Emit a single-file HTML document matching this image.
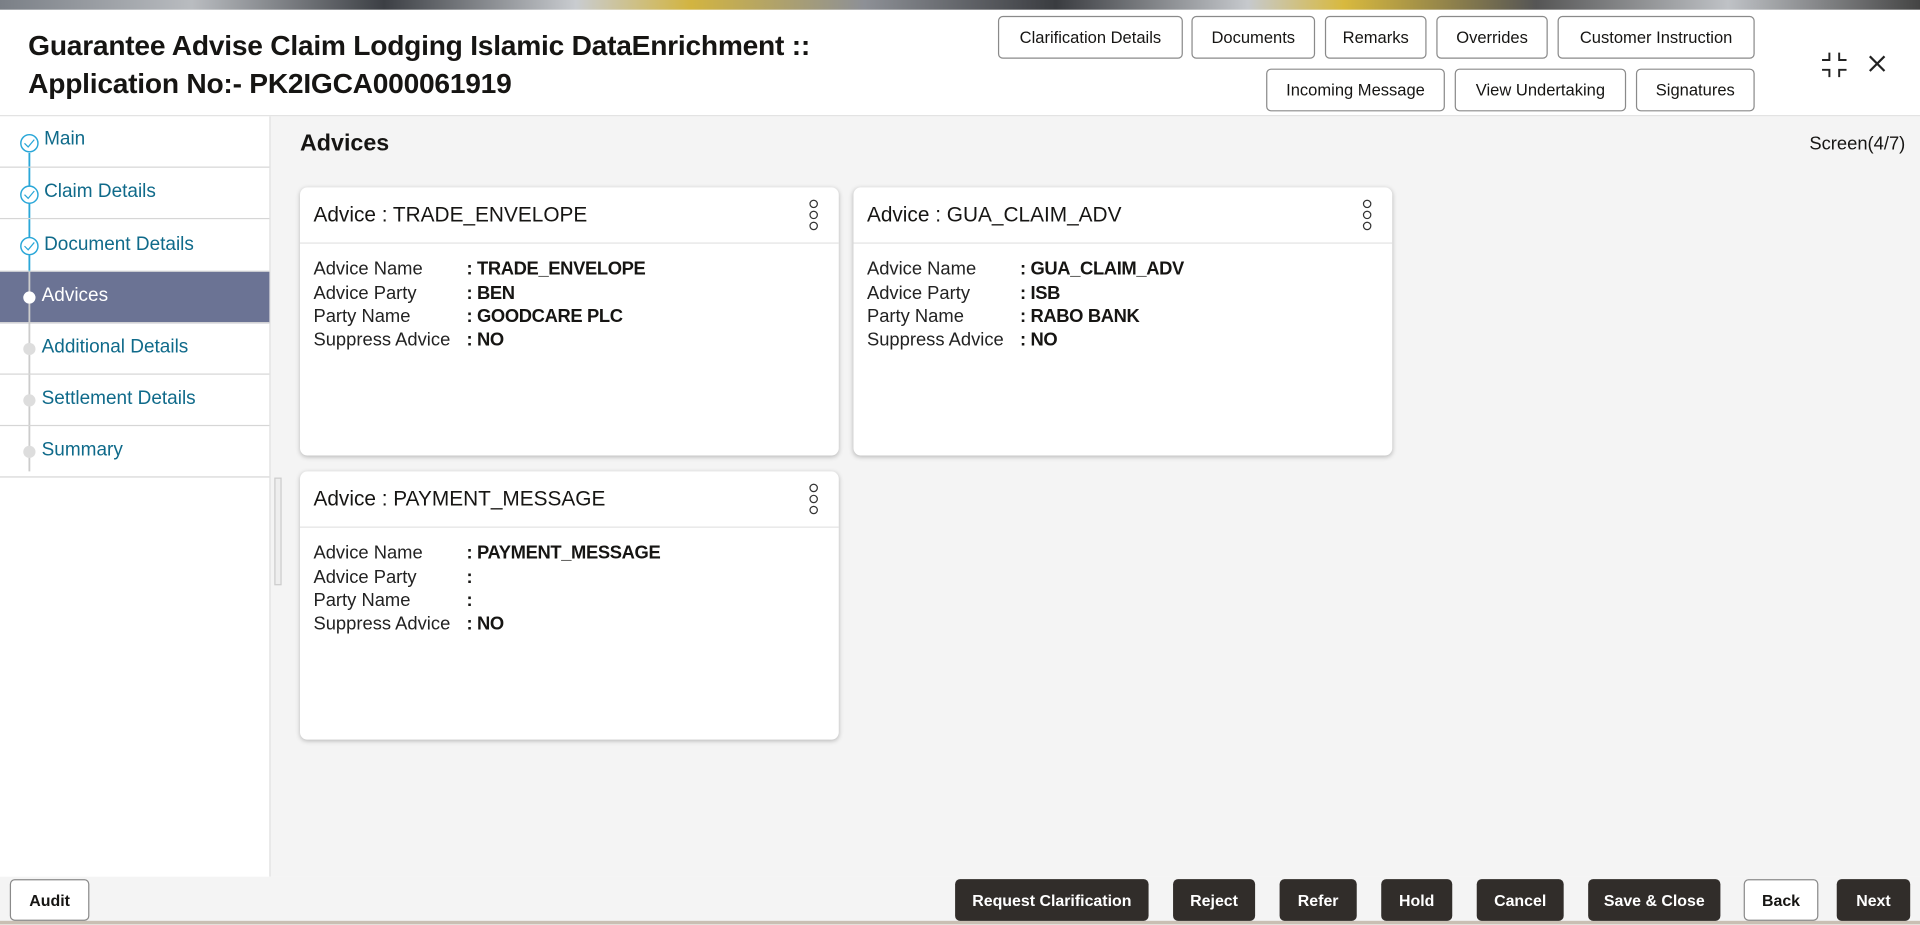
<!DOCTYPE html>
<html><head><meta charset="utf-8"><style>
*{box-sizing:border-box;margin:0;padding:0}
html,body{width:1920px;height:925px;overflow:hidden;background:#fff;font-family:"Liberation Sans",sans-serif;color:#161513}
#w{position:absolute;left:0;top:0;width:1568px;height:755px;transform:scale(1.22449);transform-origin:0 0}
.ab{position:absolute}
.top{left:0;top:0;width:1568px;height:8px;background:linear-gradient(90deg,#7a7f86,#b9bcc0 10%,#3c3f44 20%,#c9ccd0 30%,#d2b440 36%,#8d9096 45%,#3a3c40 55%,#c6c9cd 65%,#d8b93e 70%,#555 80%,#bfc2c6 90%,#444)}
.hdr{left:0;top:8px;width:1568px;height:87px;background:#fff;border-bottom:1px solid #e0e0e0}
.t{left:23px;font-size:23px;font-weight:bold;letter-spacing:-0.2px}
.b{position:absolute;height:35px;border:1px solid #8a8a8a;border-radius:4px;background:#fff;font-size:13.5px;display:flex;align-items:center;justify-content:center;color:#161513}
.side{left:0;top:95px;width:221px;height:621px;background:#fff;border-right:1px solid #ddd}
.it{position:absolute;left:0;width:220px;height:42px;border-bottom:1px solid #d6d6d6;font-size:15.5px;color:#0f6a8a}
.it span{position:absolute;left:34px;top:11px}
.main{left:221px;top:95px;width:1347px;height:621px;background:#f4f4f4}
.card{position:absolute;width:440px;height:219px;background:#fff;border-radius:6px;box-shadow:0 1px 4px rgba(0,0,0,.25)}
.ch{height:46px;border-bottom:1px solid #e3e3e3;font-size:17px;padding:13px 0 0 11px}
.row{position:absolute;left:11px;font-size:15px;color:#222}
.row b{position:absolute;left:125px;white-space:nowrap;color:#161513;letter-spacing:-0.3px}
.keb{position:absolute;right:17px;top:10px;width:7px}
.keb i{display:block;width:7px;height:7px;border:1.3px solid #333;border-radius:50%;margin-bottom:2px}
.f{position:absolute;top:718px;height:34px;border-radius:4px;background:#312d2a;color:#fff;font-size:13px;font-weight:bold;display:flex;align-items:center;justify-content:center}
</style></head><body><div id="w">
<div class="ab top"></div>
<div class="ab hdr"></div>
<div class="ab t" style="top:24px">Guarantee Advise Claim Lodging Islamic DataEnrichment ::</div>
<div class="ab t" style="top:55px">Application No:- PK2IGCA000061919</div>
<div class="b" style="left:815px;top:13px;width:151px">Clarification Details</div>
<div class="b" style="left:973px;top:13px;width:101px">Documents</div>
<div class="b" style="left:1082px;top:13px;width:83px">Remarks</div>
<div class="b" style="left:1173px;top:13px;width:91px">Overrides</div>
<div class="b" style="left:1272px;top:13px;width:161px">Customer Instruction</div>
<div class="b" style="left:1034px;top:56px;width:146px">Incoming Message</div>
<div class="b" style="left:1188px;top:56px;width:140px">View Undertaking</div>
<div class="b" style="left:1336px;top:56px;width:97px">Signatures</div>
<svg class="ab" style="left:1486px;top:41px" width="24" height="24" viewBox="0 0 24 24" fill="none" stroke="#222" stroke-width="1.6"><path d="M8 2v6H2M16 2v6h6M8 22v-6H2M16 22v-6h6"/></svg>
<svg class="ab" style="left:1525px;top:44px" width="16" height="16" viewBox="0 0 16 16" stroke="#222" stroke-width="1.8"><path d="M2 2l12 12M14 2L2 14"/></svg>

<div class="ab side">
<svg class="ab" style="left:16px;top:0" width="16" height="300"><line x1="8" y1="30" x2="8" y2="130" stroke="#2aa7d8" stroke-width="1.5"/><line x1="8" y1="130" x2="8" y2="290" stroke="#ccc" stroke-width="1.5"/>
<g fill="#fff" stroke="#2aa7d8" stroke-width="1.2"><circle cx="8" cy="22" r="7"/><circle cx="8" cy="64" r="7"/><circle cx="8" cy="106" r="7"/></g>
<g fill="none" stroke="#2aa7d8" stroke-width="1"><path d="M4 22l3 3 5-6M4 64l3 3 5-6M4 106l3 3 5-6"/></g>
<circle cx="8" cy="190" r="5" fill="#ddd"/><circle cx="8" cy="232" r="5" fill="#ddd"/><circle cx="8" cy="274" r="5" fill="#ddd"/></svg>
<div class="it" style="top:0"><span style="top:10px;left:36px">Main</span></div>
<div class="it" style="top:42px"><span style="left:36px">Claim Details</span></div>
<div class="it" style="top:85px"><span style="left:36px">Document Details</span></div>
<div class="it" style="top:127px;background:#6b7394;color:#fff"><span>Advices</span></div>
<div class="it" style="top:169px"><span>Additional Details</span></div>
<div class="it" style="top:211px"><span>Settlement Details</span></div>
<div class="it" style="top:253px"><span>Summary</span></div>
<svg class="ab" style="left:16px;top:127px" width="16" height="42"><line x1="8" y1="0" x2="8" y2="42" stroke="#ccc" stroke-width="1.5"/><circle cx="8" cy="21" r="5" fill="#fff"/></svg>
</div>

<div class="ab main">
<div class="ab" style="left:24px;top:12px;font-size:19px;font-weight:bold">Advices</div>
<div class="ab" style="right:12px;top:14px;font-size:15px">Screen(4/7)</div>
<div class="ab" style="left:3px;top:295px;width:6px;height:88px;border:1px solid #ccc;background:#eee"></div>

<div class="card" style="left:24px;top:58px"><div class="ch">Advice : TRADE_ENVELOPE</div><div class="keb"><i></i><i></i><i></i></div>
<div class="row" style="top:58px">Advice Name<b>: TRADE_ENVELOPE</b></div>
<div class="row" style="top:78px">Advice Party<b>: BEN</b></div>
<div class="row" style="top:97px">Party Name<b>: GOODCARE PLC</b></div>
<div class="row" style="top:116px">Suppress Advice<b>: NO</b></div></div>

<div class="card" style="left:476px;top:58px"><div class="ch">Advice : GUA_CLAIM_ADV</div><div class="keb"><i></i><i></i><i></i></div>
<div class="row" style="top:58px">Advice Name<b>: GUA_CLAIM_ADV</b></div>
<div class="row" style="top:78px">Advice Party<b>: ISB</b></div>
<div class="row" style="top:97px">Party Name<b>: RABO BANK</b></div>
<div class="row" style="top:116px">Suppress Advice<b>: NO</b></div></div>

<div class="card" style="left:24px;top:290px"><div class="ch">Advice : PAYMENT_MESSAGE</div><div class="keb"><i></i><i></i><i></i></div>
<div class="row" style="top:58px">Advice Name<b>: PAYMENT_MESSAGE</b></div>
<div class="row" style="top:78px">Advice Party<b>:</b></div>
<div class="row" style="top:97px">Party Name<b>:</b></div>
<div class="row" style="top:116px">Suppress Advice<b>: NO</b></div></div>
</div>

<div class="ab" style="left:0;top:716px;width:1568px;height:39px;background:#f4f4f4"></div>
<div class="ab" style="left:0;top:752px;width:1568px;height:3px;background:#c9bfb3"></div>
<div class="b" style="left:8px;top:718px;width:65px;height:34px;font-weight:bold;font-size:13px">Audit</div>
<div class="f" style="left:780px;width:158px">Request Clarification</div>
<div class="f" style="left:958px;width:67px">Reject</div>
<div class="f" style="left:1045px;width:63px">Refer</div>
<div class="f" style="left:1128px;width:58px">Hold</div>
<div class="f" style="left:1206px;width:71px">Cancel</div>
<div class="f" style="left:1297px;width:108px">Save &amp; Close</div>
<div class="b" style="left:1424px;top:718px;width:61px;height:34px;font-weight:bold;font-size:13px">Back</div>
<div class="f" style="left:1500px;width:60px">Next</div>
</div></body></html>
